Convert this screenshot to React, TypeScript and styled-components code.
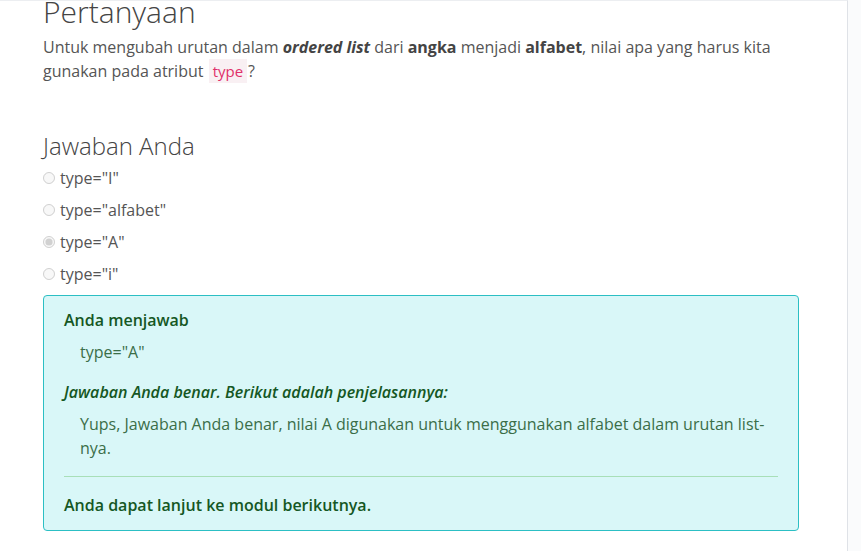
import React from "react";
import styled, { createGlobalStyle } from "styled-components";

const Global = createGlobalStyle`
  html, body {
    margin: 0;
    padding: 0;
    background: #fafbfc;
    font-family: "Open Sans", "Noto Sans", sans-serif;
    font-size: 16px;
    color: #555;
    overflow: hidden;
  }
`;

interface Option {
  label: string;
  checked?: boolean;
}

const options: Option[] = [
  { label: 'type="I"' },
  { label: 'type="alfabet"' },
  { label: 'type="A"', checked: true },
  { label: 'type="i"' },
];

export default function App() {
  return (
    <>
      <Global />
      <Page>
        <Panel>
          <Title>Pertanyaan</Title>
          <Question>
            Untuk mengubah urutan dalam{" "}
            <b>
              <i>ordered list</i>
            </b>{" "}
            dari <b>angka</b> menjadi <b>alfabet</b>, nilai apa yang harus kita
            gunakan pada atribut <Code>type</Code>?
          </Question>

          <SubTitle>Jawaban Anda</SubTitle>
          <OptionList>
            {options.map((o) => (
              <OptionRow key={o.label}>
                <input type="radio" name="jawaban" disabled defaultChecked={o.checked} />
                <span>{o.label}</span>
              </OptionRow>
            ))}
          </OptionList>

          <Alert>
            <AlertHeading>Anda menjawab</AlertHeading>
            <Indented>type="A"</Indented>
            <AlertHeading $italic>Jawaban Anda benar. Berikut adalah penjelasannya:</AlertHeading>
            <Indented>
              Yups, Jawaban Anda benar, nilai A digunakan untuk menggunakan alfabet dalam urutan list-nya.
            </Indented>
            <Divider />
            <AlertHeading>Anda dapat lanjut ke modul berikutnya.</AlertHeading>
          </Alert>
        </Panel>
      </Page>
    </>
  );
}

const Page = styled.div`
  display: flex;
  width: 861px;
  height: 551px;
  overflow: hidden;
`;

const Panel = styled.main`
  width: 848px;
  flex: none;
  box-sizing: border-box;
  background: #fff;
  border-top: 1px solid #eceef1;
  border-right: 1px solid #dfe2e7;
  padding: 0 48px 0 43px;
`;

const Title = styled.h3`
  margin: -7px 0 5px;
  font-size: 30px;
  font-weight: 300;
  line-height: 36px;
  color: #444;
`;

const Question = styled.p`
  margin: 0 0 48px;
  line-height: 24px;
  color: #555;
  b {
    color: #444;
    font-weight: 700;
  }
`;

const Code = styled.code`
  font-family: inherit;
  font-size: 15px;
  color: #e0306a;
  background: #f9f0f3;
  padding: 2px 4px;
  margin: 0 1px;
`;

const SubTitle = styled.h4`
  margin: 0 0 6px;
  font-size: 24px;
  font-weight: 300;
  line-height: 29px;
  color: #444;
`;

const OptionList = styled.div`
  display: flex;
  flex-direction: column;
  gap: 8px;
  margin-bottom: 9px;
`;

const OptionRow = styled.label`
  display: flex;
  align-items: center;
  gap: 5px;
  line-height: 24px;
  color: #555;
  input {
    margin: 0;
    width: 12px;
    height: 12px;
  }
`;

const Alert = styled.div`
  border: 1px solid #2cbfc4;
  border-radius: 4px;
  background: #d9f7f8;
  padding: 12px 20px 13px;
  color: #155724;
  display: flex;
  flex-direction: column;
`;

const AlertHeading = styled.div<{ $italic?: boolean }>`
  font-weight: 600;
  line-height: 24px;
  font-style: ${(p) => (p.$italic ? "italic" : "normal")};
  margin: 0 0 8px;
  &:last-child {
    margin-bottom: 0;
  }
`;

const Indented = styled.div`
  padding-left: 16px;
  line-height: 24px;
  color: #3b6e48;
  margin-bottom: 16px;
`;

const Divider = styled.hr`
  border: none;
  border-top: 1px solid #a8dfb8;
  margin: 0 0 16px;
  width: 100%;
`;
